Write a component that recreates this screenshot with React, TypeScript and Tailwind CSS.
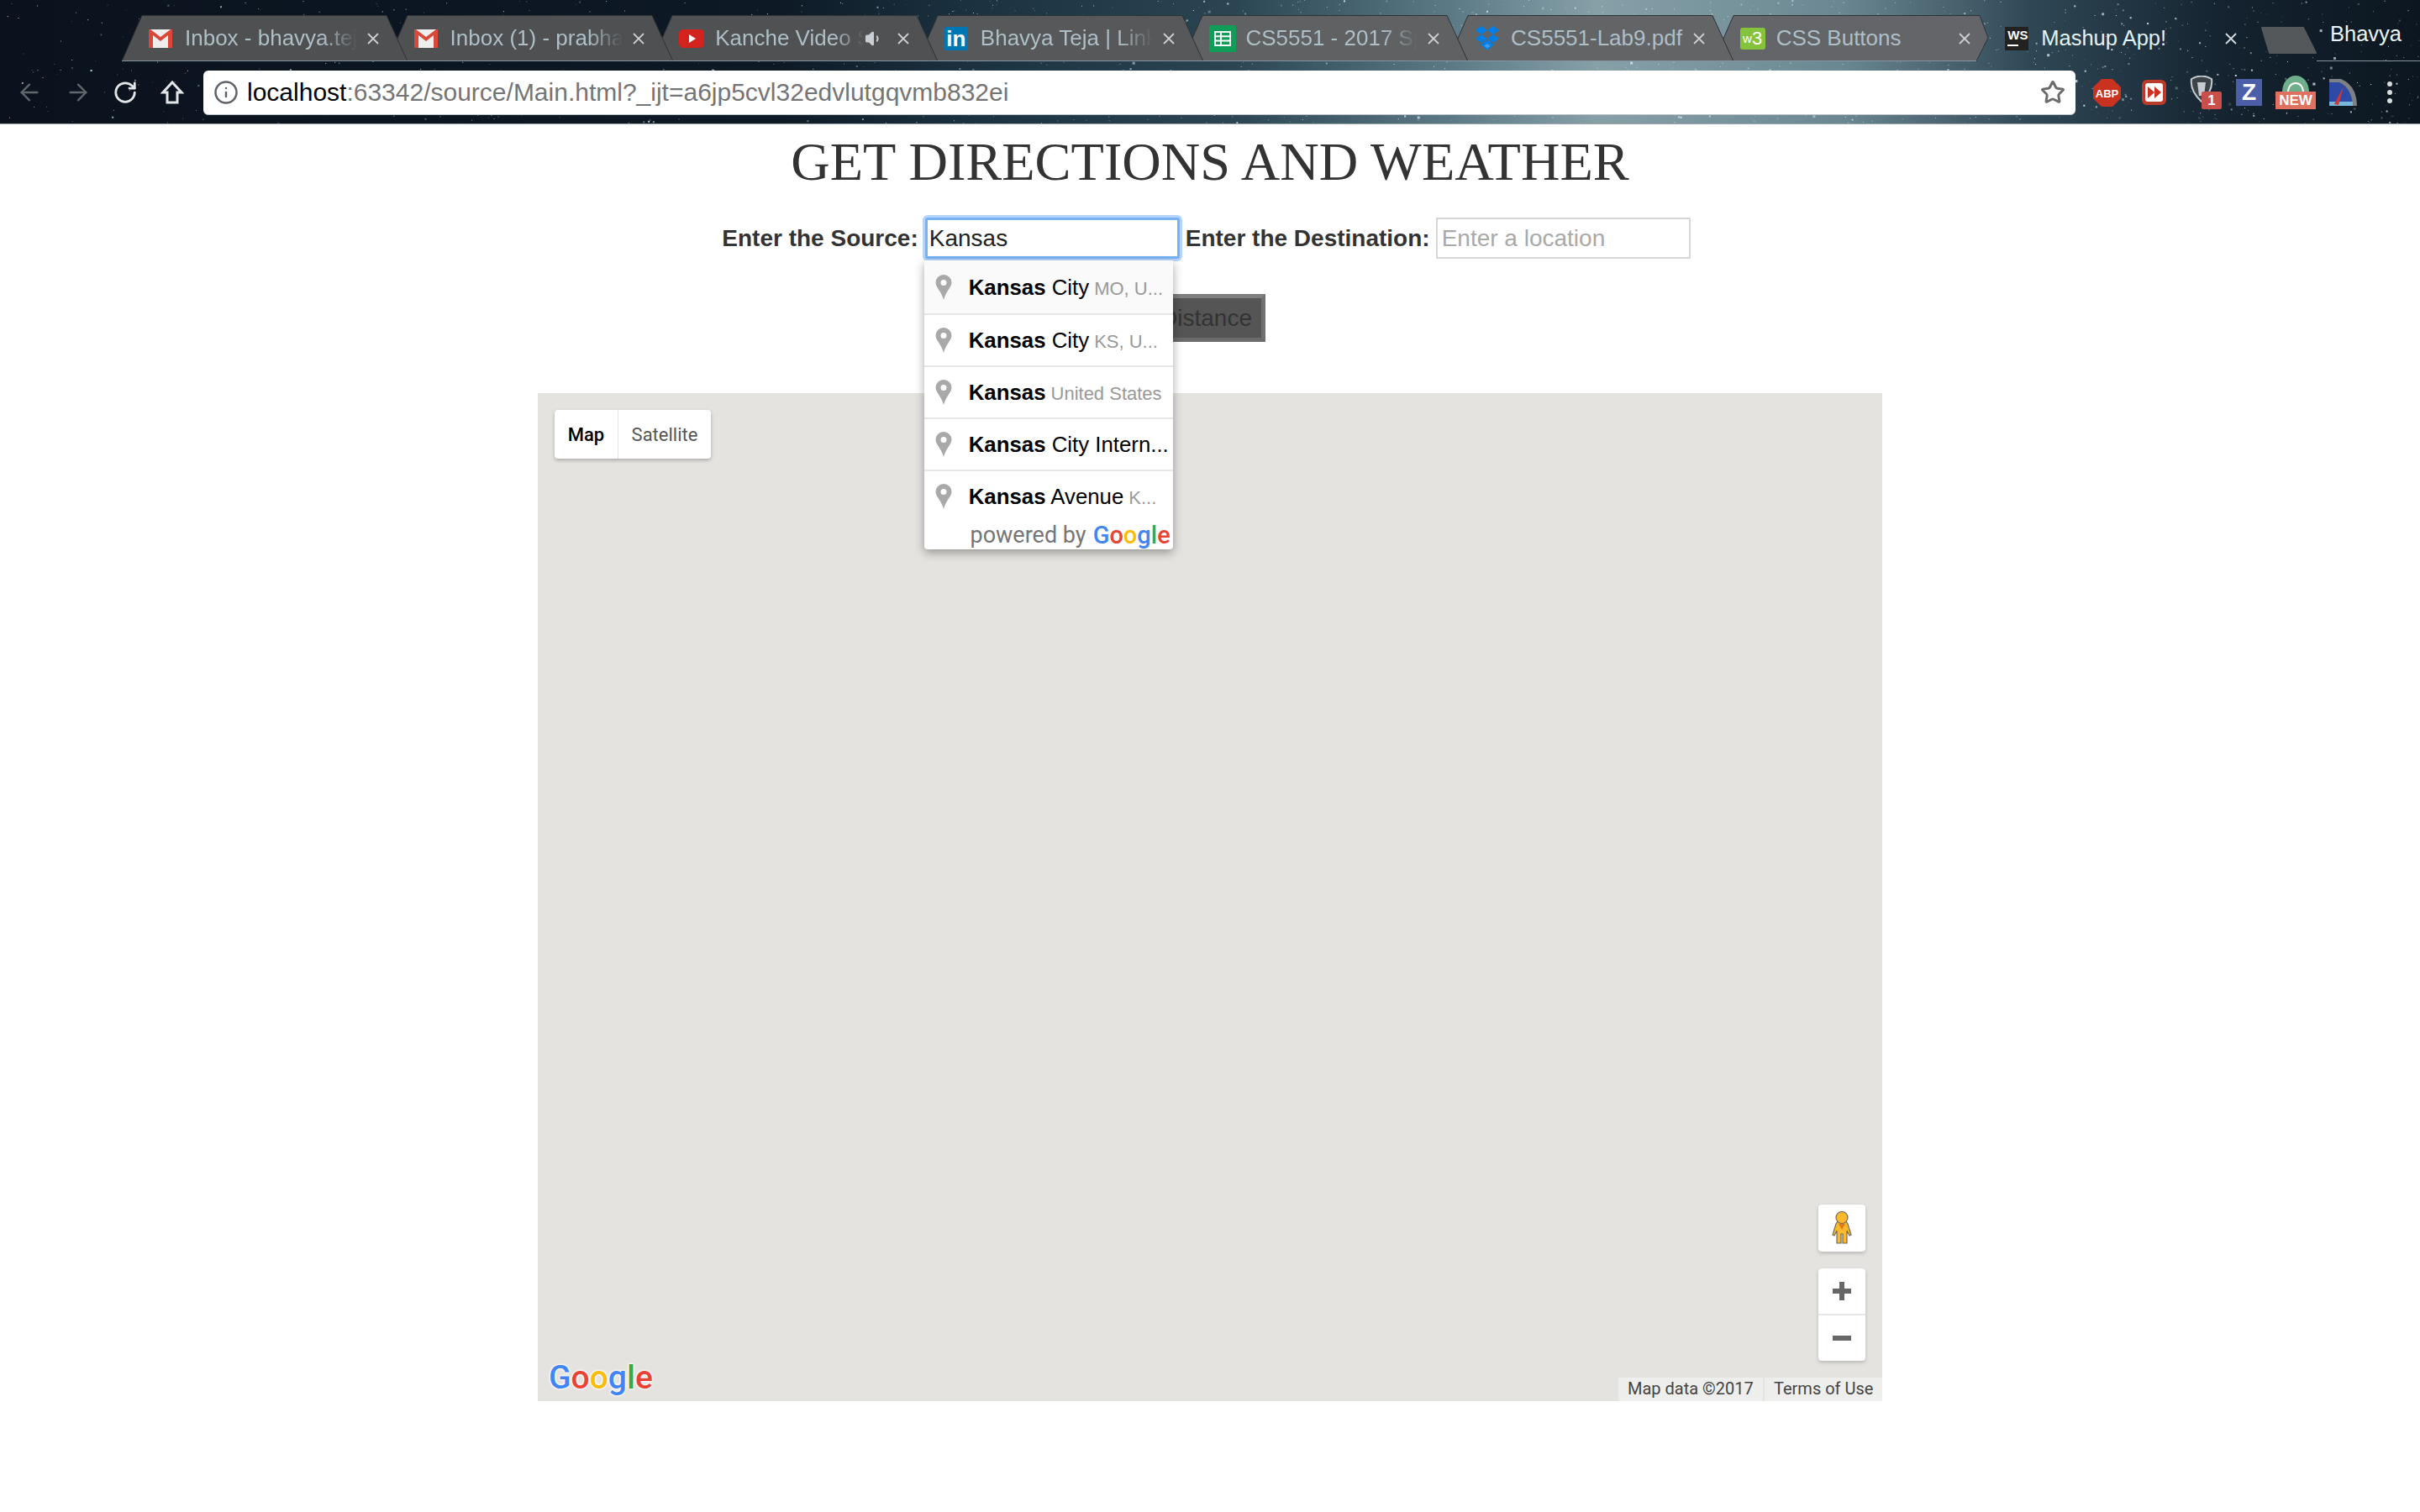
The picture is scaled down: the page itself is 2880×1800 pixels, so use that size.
import type { ReactNode } from 'react'
import { ArrowLeft, ArrowRight, Info, RotateCw, Star, Volume1 } from 'lucide-react'

// scattered stars behind the browser chrome
function makeStars() {
  const out: { x: number; y: number; s: number; o: number }[] = []
  let seed = 7
  const rnd = () => {
    seed = (seed * 16807) % 2147483647
    return seed / 2147483647
  }
  for (let i = 0; i < 1500; i++) {
    const x = rnd() < 0.22 ? rnd() * 1100 : 1000 + rnd() * 1880
    out.push({ x, y: rnd() * 147, s: rnd() < 0.8 ? 1 : rnd() < 0.8 ? 2 : 3, o: 0.15 + rnd() * 0.75 })
  }
  return out
}
const stars = makeStars()

function Gmail() {
  return (
    <svg width="28" height="22" viewBox="0 0 28 22">
      <rect width="28" height="22" fill="#eeeeee" />
      <path d="M5 22V7l9 7 9-7v15h5V0h-2L14 9 2 0H0v22z" fill="#d9483b" />
    </svg>
  )
}

function Youtube() {
  return (
    <svg width="30" height="22" viewBox="0 0 30 22">
      <rect width="30" height="22" rx="5" fill="#d2231f" />
      <path d="M12 6l8 5-8 5z" fill="#fff" />
    </svg>
  )
}

function Linkedin() {
  return (
    <div className="flex h-[28px] w-[28px] items-center justify-center rounded-[2px] bg-[#0077b5] font-['Liberation_Sans',sans-serif] text-[26px] leading-none font-bold text-white">
      in
    </div>
  )
}

function Sheets() {
  return (
    <svg width="32" height="32" viewBox="0 0 32 32">
      <rect width="32" height="32" rx="2" fill="#0f9d58" />
      <path d="M7 8h18v16H7zM7 13.3h18M7 18.6h18M14 8v16" fill="none" stroke="#fff" strokeWidth="2" />
    </svg>
  )
}

function Dropbox() {
  return (
    <svg width="30" height="30" viewBox="0 0 30 30">
      <path d="M8 0l7 5-7 5-7-5zM22 0l7 5-7 5-7-5zM8 10l7 5-7 5-7-5zM22 10l7 5-7 5-7-5zM15 16.500l8 5.500-8 7-8-7z" fill="#007ee5" />
      <path d="M15 21l4 2.500-4 3-4-3z" fill="#3d9bf0" />
    </svg>
  )
}

function W3() {
  return (
    <div className="flex h-[26px] w-[30px] items-center justify-center rounded-[3px] bg-[#85c33d] font-['Liberation_Sans',sans-serif] leading-none text-white">
      <span className="text-[15px]">w</span>
      <span className="text-[22px]">3</span>
    </div>
  )
}

function WebStorm() {
  return (
    <div className="flex h-[28px] w-[28px] flex-col bg-[#222] px-[3px] pt-[2px] font-['Liberation_Sans',sans-serif] text-[15px] leading-[15px] font-bold text-white">
      WS
      <span className="mt-[4px] h-[2px] w-[13px] bg-white" />
    </div>
  )
}

type Tab = { icon: ReactNode; title: string; fade?: boolean; sound?: boolean; fill: string }

const tabs: Tab[] = [
  { icon: <Gmail />, title: 'Inbox - bhavya.teja', fade: true, fill: '#4f5052' },
  { icon: <Gmail />, title: 'Inbox (1) - prabhakar', fade: true, fill: '#4f5052' },
  { icon: <Youtube />, title: 'Kanche Video Songs', fade: true, sound: true, fill: '#505153' },
  { icon: <Linkedin />, title: 'Bhavya Teja | LinkedIn', fade: true, fill: '#565859' },
  { icon: <Sheets />, title: 'CS5551 - 2017 Spring', fade: true, fill: '#5f6163' },
  { icon: <Dropbox />, title: 'CS5551-Lab9.pdf', fill: '#626466' },
  { icon: <W3 />, title: 'CSS Buttons', fill: '#636568' },
]

function CloseX({ color = '#c9cfd2' }: { color?: string }) {
  return (
    <svg width="16" height="16" viewBox="0 0 16 16" className="shrink-0">
      <path d="M2 2l12 12M14 2L2 14" stroke={color} strokeWidth="1.8" />
    </svg>
  )
}

function ChromeTab({ tab, index }: { tab: Tab; index: number }) {
  const last = index === tabs.length - 1
  return (
    <div className="relative mr-[-24.4px] flex h-[55px] w-[340px] shrink-0 items-center" style={{ zIndex: 20 - index }}>
      <svg className="absolute inset-0" width="340" height="55" viewBox="0 0 340 55">
        <path d={last ? 'M0 55L24 .5H317L327 27L313 55' : 'M0 55L24 .5H315L340 55'} fill={tab.fill} stroke="#2f3336" strokeWidth="1" />
        <path d={last ? 'M0 54.5H313' : 'M0 54.5H340'} stroke="#8394a0" strokeWidth="1" />
      </svg>
      <div className="relative w-[75px] shrink-0 pl-[32px]">
        <span className="flex items-center">{tab.icon}</span>
      </div>
      <div className="relative flex w-[232px] shrink-0 items-center">
        <span
          className={
            tab.sound
              ? "w-[180px] overflow-hidden font-['Liberation_Sans',sans-serif] text-[26px] whitespace-nowrap text-[#aebfc7] [mask-image:linear-gradient(90deg,#000_80%,transparent_100%)]"
              : tab.fade
                ? "w-[205px] overflow-hidden font-['Liberation_Sans',sans-serif] text-[26px] whitespace-nowrap text-[#aebfc7] [mask-image:linear-gradient(90deg,#000_80%,transparent_100%)]"
                : "w-[212px] overflow-hidden font-['Liberation_Sans',sans-serif] text-[26px] whitespace-nowrap text-[#aebfc7]"
          }
        >
          {tab.title}
        </span>
        <span className="ml-auto flex items-center gap-[16px]">
          {tab.sound && <Volume1 size={22} className="text-[#c9cfd2]" fill="#c9cfd2" />}
          <CloseX />
        </span>
      </div>
    </div>
  )
}

function ActiveTab() {
  return (
    <div className="relative z-30 mr-[-24.4px] flex h-[55px] w-[340px] shrink-0 items-center">
      <div className="w-[75px] shrink-0 pl-[32px]">
        <WebStorm />
      </div>
      <span className="font-['Liberation_Sans',sans-serif] text-[25.5px] whitespace-nowrap text-[#e3f2f7]">Mashup App!</span>
      <span className="ml-[69px]">
        <CloseX color="#d5dcdf" />
      </span>
    </div>
  )
}

function HomeIcon() {
  return (
    <svg width="28" height="30" viewBox="0 0 28 30" fill="none">
      <path d="M14 3L25 15h-5v12H8V15H3z" stroke="#e3e6e8" strokeWidth="3" strokeLinejoin="miter" />
    </svg>
  )
}

function Extensions() {
  return (
    <div className="flex items-center">
      <svg width="33" height="33" viewBox="0 0 33 33" className="ml-[21px] shrink-0">
        <path d="M10 0h13l10 10v13L23 33H10L0 23V10z" fill="#c8321f" />
        <text x="16.5" y="22" textAnchor="middle" fontFamily="Liberation Sans" fontWeight="700" fontSize="13" fill="#fff">ABP</text>
      </svg>
      <svg width="29" height="30" viewBox="0 0 29 30" className="ml-[25px] shrink-0">
        <rect width="29" height="30" rx="6" fill="#bb3a2a" />
        <rect x="4" y="4" width="21" height="22" rx="3" fill="#fff" />
        <path d="M7 8l8 7-8 7zM15 8l8 7-8 7z" fill="#c8321f" />
      </svg>
      <div className="relative ml-[28px] h-[40px] w-[38px] shrink-0">
        <svg width="28" height="32" viewBox="0 0 28 32" className="absolute top-0 left-0">
          <path d="M2 4q12-7 24 0q2 14-12 27Q0 18 2 4z" fill="#3c4349" stroke="#c5cbce" strokeWidth="2" />
          <path d="M9 8h10l-2 16h-6z" fill="#c5cbce" />
        </svg>
        <span className="absolute right-0 bottom-0 flex h-[21px] w-[24px] items-center justify-center rounded-[2px] bg-[#c9504a] font-['Liberation_Sans',sans-serif] text-[17px] font-bold text-white">
          1
        </span>
      </div>
      <div className="ml-[17px] flex h-[32px] w-[31px] shrink-0 items-center justify-center bg-[#4a5fa8] font-['Liberation_Sans',sans-serif] text-[28px] font-bold text-white">
        Z
      </div>
      <div className="relative ml-[16px] h-[40px] w-[48px] shrink-0">
        <svg width="32" height="20" viewBox="0 0 32 20" className="absolute top-0 left-[8px]">
          <path d="M0 20C0 8 7 0 16 0s16 8 16 20z" fill="#6fae8a" />
          <path d="M7 20c0-7 4-11 9-11s9 4 9 11" fill="none" stroke="#fff" strokeWidth="2" />
        </svg>
        <span className="absolute bottom-0 left-0 flex h-[21px] w-[48px] items-center justify-center bg-[#e0705f] font-['Liberation_Sans',sans-serif] text-[17px] leading-none font-bold text-white">
          NEW
        </span>
      </div>
      <svg width="33" height="32" viewBox="0 0 33 32" className="ml-[16px] shrink-0">
        <path d="M0 0h14q19 8 19 32H0z" fill="#7d8184" />
        <path d="M0 4h12q15 7 16 28H0z" fill="#2d4aa6" />
        <path d="M0 27h28v5H0z" fill="#79b6dc" />
        <path d="M6 30L17 9l-6 22z" fill="#d43636" />
      </svg>
      <div className="ml-[36px] flex flex-col gap-[4px]">
        <span className="h-[6px] w-[6px] rounded-full bg-[#d7dcdf]" />
        <span className="h-[6px] w-[6px] rounded-full bg-[#d7dcdf]" />
        <span className="h-[6px] w-[6px] rounded-full bg-[#d7dcdf]" />
      </div>
    </div>
  )
}

function BrowserChrome() {
  return (
    <div className="relative h-[148px] w-full overflow-hidden border-b border-[#9aa5ab] bg-[linear-gradient(90deg,#0a121d_0%,#0d1925_32%,#1b3140_40%,#2b4553_51%,#5c7a86_60%,#86a0a8_66%,#6b8892_76%,#2f4755_84%,#14232f_92%,#0c1620_100%)]">
      <svg className="absolute inset-0" width="2880" height="147">
        {stars.map((s, i) => (
          <rect key={i} x={s.x} y={s.y} width={s.s} height={s.s} fill="#dfeef5" opacity={s.o} />
        ))}
      </svg>
      <div className="relative flex h-[73px] items-end pl-[145px]">
        {tabs.map((t, i) => (
          <ChromeTab key={t.title} tab={t} index={i} />
        ))}
        <ActiveTab />
        <svg width="66" height="32" viewBox="0 0 66 32" className="relative mb-[9px] ml-[21px] shrink-0">
          <path d="M1 1H50L65 31H10z" fill="#55585a" stroke="#55585a" strokeLinejoin="round" strokeWidth="2" />
        </svg>
        <div className="relative ml-auto flex h-[73px] flex-1 flex-col items-end">
          <span className="mt-[25px] mr-[22px] font-['Liberation_Sans',sans-serif] text-[25.5px] leading-[30px] text-[#e8f5f9]">Bhavya</span>
          <span className="mt-auto h-px w-full bg-[#8394a0]" />
        </div>
      </div>
      <div className="relative flex h-[74px] items-center">
        <ArrowLeft size={32} strokeWidth={1.8} className="ml-[19px] shrink-0 text-[#5f676c]" />
        <ArrowRight size={32} strokeWidth={1.8} className="ml-[26px] shrink-0 text-[#5f676c]" />
        <RotateCw size={30} strokeWidth={2.2} className="ml-[25px] shrink-0 text-[#e3e6e8]" />
        <span className="ml-[27px] shrink-0">
          <HomeIcon />
        </span>
        <div className="ml-[23px] flex h-[53px] w-[2228px] shrink-0 items-center rounded-[6px] border-b border-[#b8c0c4] bg-white pr-[12px] pl-[12px]">
          <Info size={30} strokeWidth={2} className="shrink-0 text-[#5f6368]" />
          <span className="ml-[10px] font-['Liberation_Sans',sans-serif] text-[30px] whitespace-nowrap text-[#757575]">
            <span className="text-black">localhost</span>:63342/source/Main.html?_ijt=a6jp5cvl32edvlutgqvmb832ei
          </span>
          <Star size={30} strokeWidth={2.4} className="ml-auto shrink-0 text-[#6c6c6c]" />
        </div>
        <Extensions />
      </div>
    </div>
  )
}

function GoogleLogo({ className }: { className: string }) {
  return (
    <span className={className}>
      <span className="text-[#4285f4]">G</span>
      <span className="text-[#ea4335]">o</span>
      <span className="text-[#fbbc05]">o</span>
      <span className="text-[#4285f4]">g</span>
      <span className="text-[#34a853]">l</span>
      <span className="text-[#ea4335]">e</span>
    </span>
  )
}

function Pin() {
  return (
    <svg width="20" height="30" viewBox="0 0 20 30" className="shrink-0">
      <path d="M10 0a9.5 9.5 0 0 1 9.5 9.5C19.500 15 13 19 10 30 7 19 .5 15 .5 9.5A9.500 9.500 0 0 1 10 0z" fill="#a9a9a9" />
      <circle cx="10" cy="9.500" r="3.500" fill="#fff" />
    </svg>
  )
}

const suggestions = [
  { bold: 'Kansas', rest: ' City', sub: 'MO, U...' },
  { bold: 'Kansas', rest: ' City', sub: 'KS, U...' },
  { bold: 'Kansas', rest: '', sub: 'United States' },
  { bold: 'Kansas', rest: ' City Intern...', sub: '' },
  { bold: 'Kansas', rest: ' Avenue', sub: 'K...' },
]

function Dropdown() {
  return (
    <div className="absolute top-[51px] left-[-1px] z-20 h-[344px] w-[296px] overflow-hidden rounded-b-[4px] bg-white text-left font-['Liberation_Sans',sans-serif] font-normal shadow-[0_4px_12px_rgba(0,0,0,0.35)]">
      {suggestions.map((s, i) => (
        <div
          key={i}
          className={
            i === 0
              ? 'flex h-[64px] items-center bg-[#fafafa] pl-[13px]'
              : 'flex h-[62px] items-center pl-[13px]'
          }
        >
          <Pin />
          <span className="ml-[20px] text-[25.8px] whitespace-nowrap text-black">
            <span className="font-bold">{s.bold}</span>
            {s.rest}
            {s.sub && <span className="ml-[6px] text-[22px] text-[#999]">{s.sub}</span>}
          </span>
        </div>
      ))}
      <div className="flex h-[31px] items-center justify-end pr-[3px] whitespace-nowrap">
        <span className="font-['Roboto',sans-serif] text-[27px] text-[#757575]">powered by</span>
        <GoogleLogo className="ml-[8px] font-['Roboto',sans-serif] text-[29px] font-medium" />
      </div>
    </div>
  )
}

function Separators() {
  return (
    <div className="pointer-events-none absolute top-[114px] left-[-1px] z-30 flex w-[296px] flex-col gap-[60px]">
      <span className="h-[2px] bg-[#e6e6e6]" />
      <span className="h-[2px] bg-[#e6e6e6]" />
      <span className="h-[2px] bg-[#e6e6e6]" />
      <span className="h-[2px] bg-[#e6e6e6]" />
    </div>
  )
}

function Pegman() {
  return (
    <svg width="26" height="40" viewBox="0 0 26 40">
      <path d="M8 12h10l2 3 4 13-2 1-3-6v15h-5V27h-2v11H7V23l-3 6-2-1 4-13z" fill="#fdb92b" stroke="#6f6b60" strokeWidth="1.200" />
      <circle cx="13" cy="7.500" r="7" fill="#fdb92b" stroke="#6f6b60" strokeWidth="1.200" />
      <path d="M9 15h8l-4 7z" fill="#e07b1a" />
    </svg>
  )
}

function MapPanel() {
  return (
    <div className="relative mx-auto mt-[61px] h-[1200px] w-[1600px] bg-[#e4e3df]">
      <div className="absolute top-[20px] left-[20px] flex h-[58px] w-[186px] rounded-[4px] bg-white font-['Roboto',sans-serif] text-[22px] shadow-[0_2px_4px_rgba(0,0,0,0.25)]">
        <div className="flex w-[76px] items-center justify-center border-r border-[#e6e6e6] font-medium text-black">Map</div>
        <div className="flex flex-1 items-center justify-center text-[#565656]">Satellite</div>
      </div>
      <div className="absolute right-[20px] bottom-[178px] flex h-[56px] w-[56px] items-center justify-center rounded-[4px] bg-white shadow-[0_2px_4px_rgba(0,0,0,0.2)]">
        <Pegman />
      </div>
      <div className="absolute right-[20px] bottom-[48px] flex h-[110px] w-[56px] flex-col rounded-[4px] bg-white shadow-[0_2px_4px_rgba(0,0,0,0.2)]">
        <div className="flex h-[56px] items-center justify-center border-b-2 border-[#e6e6e6]">
          <svg width="22" height="22" viewBox="0 0 22 22">
            <path d="M8 0h6v8h8v6h-8v8H8v-8H0V8h8z" fill="#666" />
          </svg>
        </div>
        <div className="flex flex-1 items-center justify-center">
          <span className="h-[6px] w-[22px] bg-[#666]" />
        </div>
      </div>
      <GoogleLogo className="absolute bottom-[4px] left-[13px] font-['Roboto',sans-serif] text-[39px] leading-[48px] font-medium [text-shadow:0_0_3px_#fff,0_0_3px_#fff,0_0_3px_#fff]" />
      <div className="absolute right-0 bottom-0 flex h-[28px] gap-[2px] font-['Roboto',sans-serif] text-[20px] leading-[26px] text-[#444]">
        <span className="w-[172px] bg-[#eeeeec] pl-[11px]">Map data ©2017</span>
        <span className="w-[140px] bg-[#eeeeec] pl-[11px]">Terms of Use</span>
      </div>
    </div>
  )
}

export default function App() {
  return (
    <div className="min-h-[1800px] bg-white font-['Liberation_Sans',sans-serif] text-[#333]">
      <BrowserChrome />
      <h1 className="mt-[8px] text-center font-['Liberation_Serif',serif] text-[64.4px] leading-[74px] font-normal">
        GET DIRECTIONS AND WEATHER
      </h1>
      <div className="mt-[29px] flex items-center justify-center pr-[9px] text-[28px] font-bold">
        <label>Enter the Source:</label>
        <div className="relative ml-[8px]">
          <input
            readOnly
            value="Kansas"
            className="h-[49px] w-[303px] rounded-[3px] border-[3px] border-[#78b1f6] bg-white pl-[2px] text-[28px] font-normal text-[#222] shadow-[0_0_0_3px_#b5d4fb] outline-none"
          />
          <Dropdown />
          <Separators />
        </div>
        <label className="ml-[7px]">Enter the Destination:</label>
        <input
          readOnly
          placeholder="Enter a location"
          className="ml-[7px] h-[49px] w-[303px] border-2 border-[#d6d6d6] bg-white pl-[5px] text-[28px] font-normal outline-none placeholder:text-[#a9a9a9]"
        />
      </div>
      <div className="mt-[42px] flex w-[1506px] justify-end">
        <button className="h-[57px] border-[5px] border-t-[#7f7f7f] border-r-[#707070] border-b-[#6b6b6b] border-l-[#7f7f7f] bg-[#555] px-[11px] text-[28px] text-[#333]">
          Get Distance
        </button>
      </div>
      <MapPanel />
    </div>
  )
}
